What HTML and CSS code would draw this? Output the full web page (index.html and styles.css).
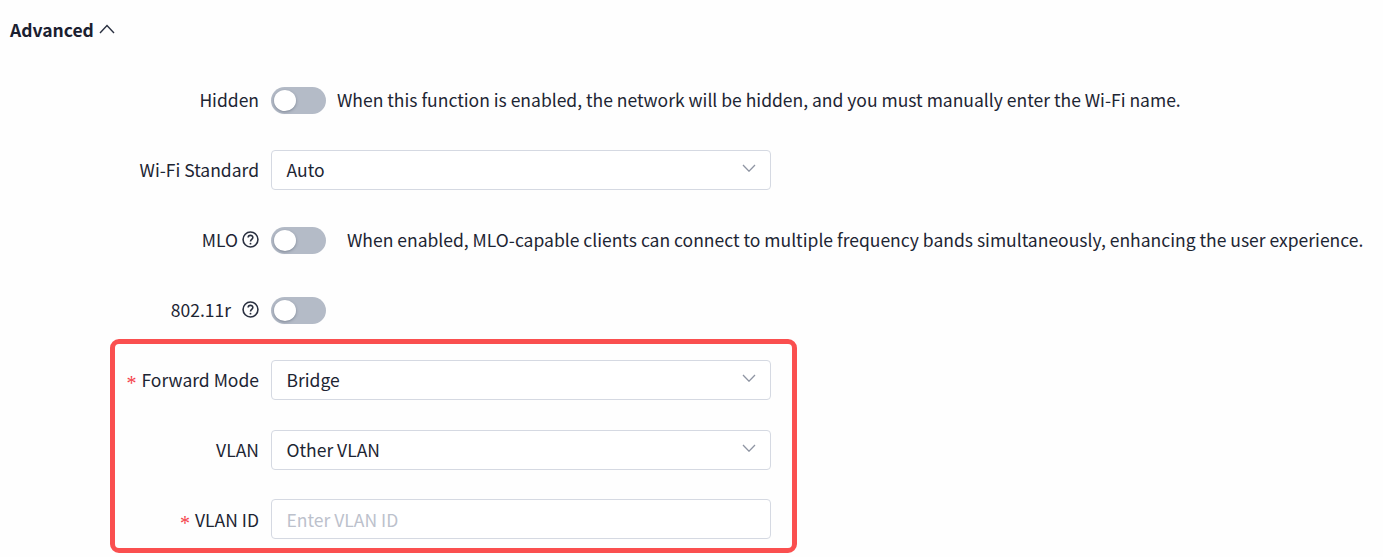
FILE: index.html
```html
<!DOCTYPE html>
<html lang="en">
<head>
    <meta charset="UTF-8">
    <meta name="viewport" content="width=device-width, initial-scale=1.0">
    <title>Advanced</title>
    <link rel="stylesheet" href="styles.css">
</head>
<body>
    <div class="section-title">
        <span>Advanced</span>
        <svg class="title-arrow" viewBox="0 0 16 10" width="16" height="10"><path d="M1 9 L8 1.5 L15 9" /></svg>
    </div>

    <form class="form">
        <div class="form-row">
            <label class="form-label">Hidden</label>
            <div class="form-control">
                <span class="switch"><span class="switch-knob"></span></span>
                <span class="hint">When this function is enabled, the network will be hidden, and you must manually enter the Wi-Fi name.</span>
            </div>
        </div>

        <div class="form-row">
            <label class="form-label">Wi-Fi Standard</label>
            <div class="form-control">
                <div class="select">
                    <span>Auto</span>
                    <svg class="select-arrow" viewBox="0 0 14 8" width="14" height="8"><path d="M1 1 L7 7.2 L13 1" /></svg>
                </div>
            </div>
        </div>

        <div class="form-row">
            <label class="form-label">MLO
                <svg class="help" viewBox="0 0 16 16" width="17" height="17"><circle cx="8" cy="8" r="7" /><path d="M5.8 6.2 C5.8 3.4 10.2 3.4 10.2 6.1 C10.2 7.9 8 7.8 8 9.8" /><circle class="help-dot" cx="8" cy="11.9" r="0.9" /></svg>
            </label>
            <div class="form-control">
                <span class="switch"><span class="switch-knob"></span></span>
                <span class="hint hint-wide">When enabled, MLO-capable clients can connect to multiple frequency bands simultaneously, enhancing the user experience.</span>
            </div>
        </div>

        <div class="form-row">
            <label class="form-label">802.11r
                <svg class="help help-spaced" viewBox="0 0 16 16" width="17" height="17"><circle cx="8" cy="8" r="7" /><path d="M5.8 6.2 C5.8 3.4 10.2 3.4 10.2 6.1 C10.2 7.9 8 7.8 8 9.8" /><circle class="help-dot" cx="8" cy="11.9" r="0.9" /></svg>
            </label>
            <div class="form-control">
                <span class="switch"><span class="switch-knob"></span></span>
            </div>
        </div>

        <div class="form-row">
            <label class="form-label"><span class="required">*</span>Forward Mode</label>
            <div class="form-control">
                <div class="select">
                    <span>Bridge</span>
                    <svg class="select-arrow" viewBox="0 0 14 8" width="14" height="8"><path d="M1 1 L7 7.2 L13 1" /></svg>
                </div>
            </div>
        </div>

        <div class="form-row">
            <label class="form-label">VLAN</label>
            <div class="form-control">
                <div class="select">
                    <span>Other VLAN</span>
                    <svg class="select-arrow" viewBox="0 0 14 8" width="14" height="8"><path d="M1 1 L7 7.2 L13 1" /></svg>
                </div>
            </div>
        </div>

        <div class="form-row form-row-last">
            <label class="form-label"><span class="required">*</span>VLAN ID</label>
            <div class="form-control">
                <div class="select select-input"><span>Enter VLAN ID</span></div>
            </div>
        </div>
    </form>

    <!-- annotation drawn over the form -->
    <div class="highlight"></div>
</body>
</html>
```

FILE: styles.css
```css
body, html {
    margin: 0;
    padding: 0;
    height: 100%;
    background-color: #fefefe;
    overflow: hidden;
}

body {
    font-family: "Noto Sans CJK SC", "Noto Sans", sans-serif;
    font-size: 17.5px;
    color: #1d2533;
    position: relative;
}

.section-title {
    display: flex;
    align-items: center;
    gap: 5px;
    height: 24px;
    padding: 18px 0 0 10px;
    font-weight: 700;
    color: #1a2030;
}

.section-title span {
    padding-bottom: 2px;
}

.title-arrow {
    fill: none;
    stroke: #2a3040;
    stroke-width: 1.4;
    margin-bottom: 3px;
}

.form {
    display: flex;
    flex-direction: column;
    gap: 30px;
    padding-top: 38px;
}

.form-row {
    display: flex;
    align-items: center;
    height: 40px;
}

.form-row-last {
    margin-top: -1px;
}

.form-row-last .form-label,
.form-row-last .select {
    padding-bottom: 0;
}

.form-label {
    width: 259px;
    display: flex;
    align-items: center;
    justify-content: flex-end;
    flex-shrink: 0;
    margin-right: 12px;
    padding-bottom: 2px;
    white-space: nowrap;
}

.required {
    font-family: "Liberation Serif", serif;
    font-size: 20px;
    line-height: 1;
    color: #f5424a;
    margin-right: 5px;
    padding-top: 8px;
}

.help {
    fill: none;
    stroke: #2a3040;
    stroke-width: 1.5;
    margin-left: 4px;
}

.help-spaced {
    margin-left: 11px;
}

.help-dot {
    fill: #2a3040;
    stroke: none;
}

.form-control {
    display: flex;
    align-items: center;
    flex: 1;
    white-space: nowrap;
}

.switch {
    display: block;
    width: 55px;
    height: 27px;
    margin-top: 1px;
    padding: 3px;
    box-sizing: border-box;
    border-radius: 14px;
    background-color: #b4bbc7;
    flex-shrink: 0;
}

.switch-knob {
    display: block;
    width: 22px;
    height: 21px;
    border-radius: 50%;
    background-color: #ffffff;
    box-shadow: 0 1px 3px rgba(30, 40, 60, 0.35);
}

.hint {
    margin-left: 11px;
    padding-bottom: 2px;
}

.hint-wide {
    margin-left: 21px;
}

.select {
    width: 500px;
    height: 40px;
    box-sizing: border-box;
    padding: 0 14px 2px 14.5px;
    display: flex;
    align-items: center;
    justify-content: space-between;
    background-color: #ffffff;
    border: 1px solid #d5d9e2;
    border-radius: 4px;
}

.select-input {
    color: #bcc1cc;
}

.select-arrow {
    fill: none;
    stroke: #8f95a3;
    stroke-width: 1.3;
    margin-bottom: 2px;
}

.highlight {
    position: absolute;
    left: 110px;
    top: 339px;
    width: 687px;
    height: 214px;
    box-sizing: border-box;
    border: 5px solid #fa4f4f;
    border-radius: 9px;
}
```
